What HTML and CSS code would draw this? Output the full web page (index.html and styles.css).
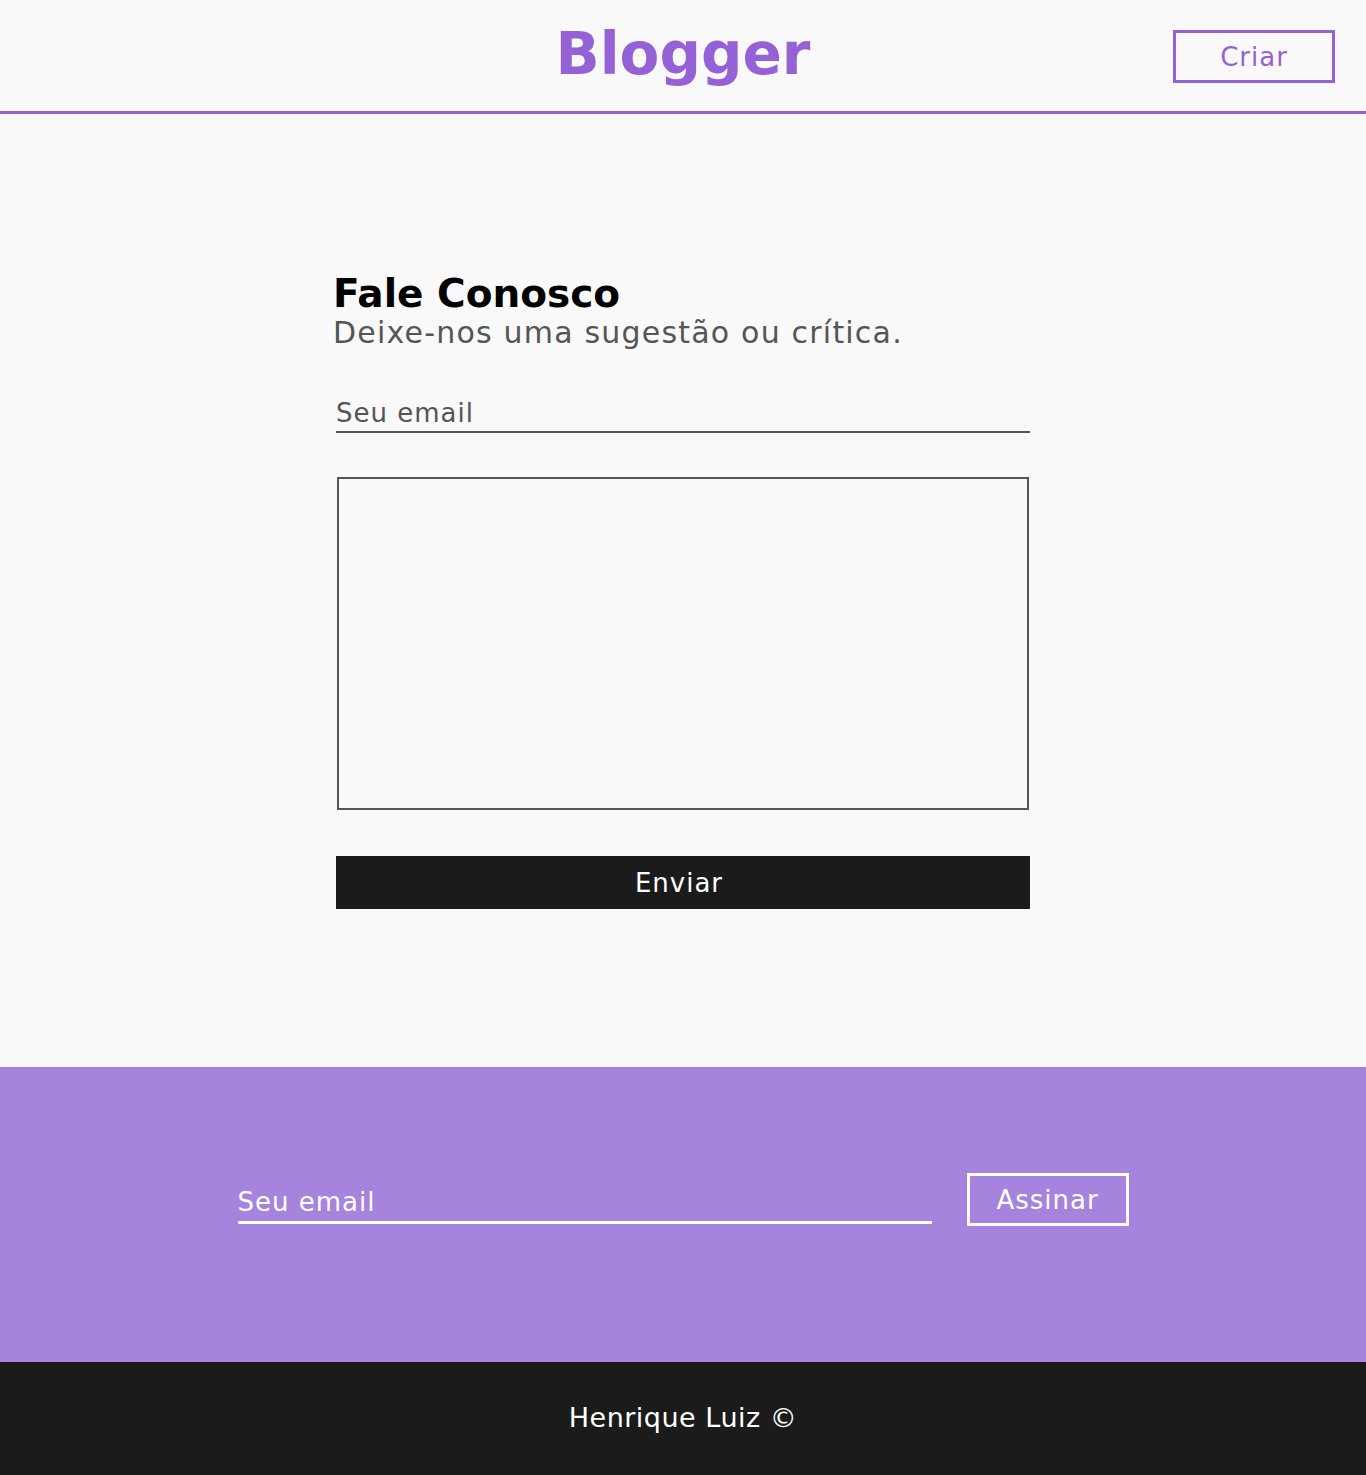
FILE: index.html
```html
<!DOCTYPE html>
<html lang="pt-BR">
<head>
<meta charset="utf-8">
<title>Blogger - Fale Conosco</title>
<link rel="stylesheet" href="styles.css">
</head>
<body>
<header class="topbar">
  <div class="topbar-side"></div>
  <h1 class="logo">Blogger</h1>
  <div class="topbar-side topbar-right">
    <button class="btn-criar">Criar</button>
  </div>
</header>
<main class="contact">
  <div class="contact-inner">
    <h2 class="contact-title">Fale Conosco</h2>
    <p class="contact-sub">Deixe-nos uma sugestão ou crítica.</p>
    <form class="contact-form">
      <input class="line-input" type="email" placeholder="Seu email">
      <textarea class="message"></textarea>
      <button class="btn-enviar" type="button">Enviar</button>
    </form>
  </div>
</main>
<section class="newsletter">
  <form class="news-form">
    <input class="line-input light" type="email" placeholder="Seu email">
    <button class="btn-assinar" type="button">Assinar</button>
  </form>
</section>
<footer class="bottom">
  <p>Henrique Luiz ©</p>
</footer>
</body>
</html>
```

FILE: styles.css
```css
* { box-sizing: border-box; }
body {
  margin: 0;
  background: #f9f9f9;
  font-family: "DejaVu Sans", "Open Sans", sans-serif;
  color: #000;
}
.topbar {
  display: grid;
  grid-template-columns: 1fr auto 1fr;
  align-items: center;
  height: 114px;
  border-bottom: 3px solid #9461d6;
}
.logo {
  margin: 0;
  font-family: "DejaVu Sans", sans-serif;
  font-weight: 700;
  font-size: 58px;
  color: #9461d6;
  letter-spacing: 0;
  line-height: 1;
  padding-bottom: 4px;
}
.topbar-right {
  display: flex;
  justify-content: flex-end;
  padding-right: 31px;
  padding-top: 1px;
}
.btn-criar {
  width: 162px;
  height: 53px;
  background: transparent;
  border: 3px solid #9461d6;
  color: #9461d6;
  font-family: inherit;
  font-size: 26px;
  letter-spacing: 1px;
  padding-top: 2px;
  cursor: pointer;
}
.contact {
  height: 953px;
  display: flex;
  justify-content: center;
}
.contact-inner {
  width: 694px;
  padding-top: 158px;
}
.contact-title {
  margin: 0 0 0 -3px;
  font-size: 39px;
  font-weight: 600;
  line-height: 44px;
}
.contact-sub {
  margin: 0 0 0 -3px;
  font-size: 30px;
  letter-spacing: 1.2px;
  color: #555;
  line-height: 33px;
}
.contact-form {
  display: flex;
  flex-direction: column;
  margin-top: 36px;
}
.line-input {
  height: 48px;
  background: transparent;
  border: 0;
  border-bottom: 2px solid #555;
  font-family: inherit;
  font-size: 26px;
  letter-spacing: 1px;
  color: #555;
  padding: 10px 0 0;
  outline: none;
}
.line-input::placeholder { color: #555; }
.message {
  margin-top: 44px;
  height: 333px;
  border: 2px solid #555;
  background: transparent;
  resize: none;
  margin-left: 1px;
  margin-right: 1px;
}
.btn-enviar {
  margin-top: 46px;
  height: 53px;
  border: 0;
  background: #1b1b1b;
  color: #fff;
  font-family: inherit;
  font-size: 26px;
  letter-spacing: 1px;
  padding-right: 14px;
  cursor: pointer;
}
.newsletter {
  background: #a683dc;
  height: 295px;
  display: flex;
  justify-content: center;
  padding-top: 106px;
}
.news-form {
  display: flex;
  align-items: flex-start;
  gap: 35px;
}
.line-input.light {
  width: 694px;
  height: 51px;
  border-bottom: 3px solid #fff;
  color: #fff;
}
.line-input.light::placeholder { color: #fff; }
.btn-assinar {
  width: 162px;
  height: 53px;
  background: transparent;
  border: 3px solid #fff;
  color: #fff;
  font-family: inherit;
  font-size: 26px;
  letter-spacing: 1px;
  cursor: pointer;
}
.bottom {
  background: #1b1b1b;
  height: 113px;
  display: flex;
  align-items: center;
  justify-content: center;
  padding-bottom: 2px;
}
.bottom p {
  margin: 0;
  color: #fff;
  font-size: 27px;
  letter-spacing: 0.5px;
}
```
